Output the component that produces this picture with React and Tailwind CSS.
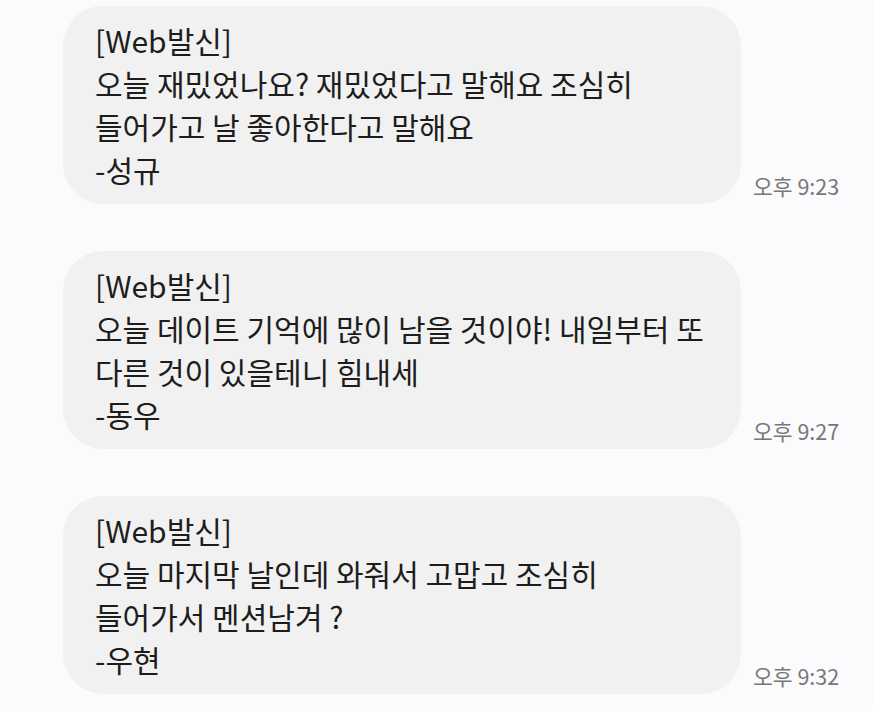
import React from "react";

const messages = [
  {
    lines: ["[Web발신]", "오늘 재밌었나요? 재밌었다고 말해요 조심히", "들어가고 날 좋아한다고 말해요", "-성규"],
    time: "오후 9:23",
  },
  {
    lines: ["[Web발신]", "오늘 데이트 기억에 많이 남을 것이야! 내일부터 또", "다른 것이 있을테니 힘내세", "-동우"],
    time: "오후 9:27",
  },
  {
    lines: ["[Web발신]", "오늘 마지막 날인데 와줘서 고맙고 조심히", "들어가서 멘션남겨 ?", "-우현"],
    time: "오후 9:32",
  },
];

const font = { fontFamily: '"Noto Sans CJK KR", "Noto Sans", sans-serif' };

export default function App() {
  return (
    <div className="w-[873px] h-[711px] bg-[#fbfbfd] overflow-hidden" style={font}>
      <div className="flex flex-col gap-[47px] pt-[6px] pl-[63px]">
        {messages.map((m, i) => (
          <div key={i} className="flex items-end">
            {/* Bubble */}
            <div className="w-[678px] h-[198px] rounded-[40px] bg-[#f1f1f1] pl-[32px] pt-[13px]">
              {m.lines.map((l, j) => (
                <p key={j} className="text-[30px] leading-[43px] text-[#1d1d1d] whitespace-pre">
                  {l}
                </p>
              ))}
            </div>
            {/* Time */}
            <span className="ml-[12px] mb-[2px] text-[21.5px] text-[#777777] whitespace-nowrap">
              {m.time}
            </span>
          </div>
        ))}
      </div>
    </div>
  );
}
